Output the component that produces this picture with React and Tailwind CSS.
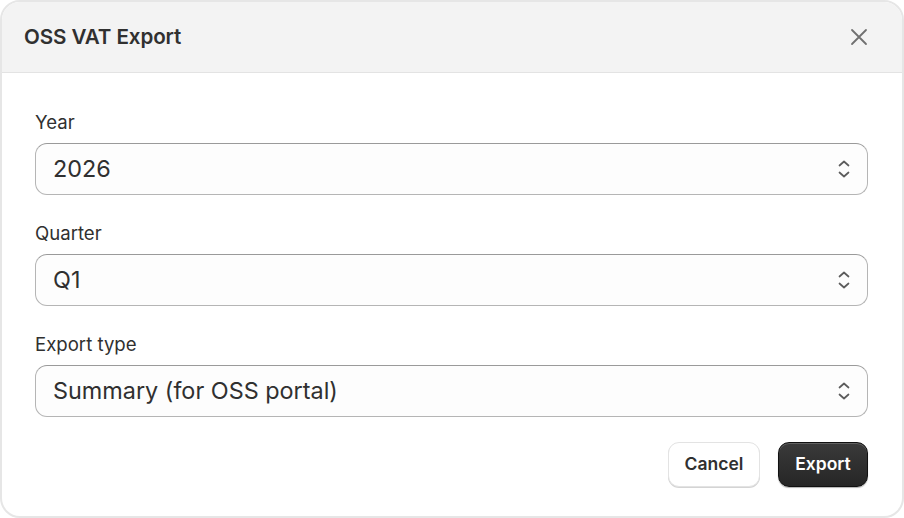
import React from "react";

const font = { fontFamily: "Inter, 'Noto Sans', sans-serif" };

function Chevrons() {
  return (
    <svg width="14" height="22" viewBox="0 0 14 22" fill="none" className="shrink-0">
      <path d="M2.5 7.5 L7 3.5 L11.5 7.5" stroke="#5c5c5c" strokeWidth="1.7" strokeLinecap="round" strokeLinejoin="round" />
      <path d="M2.5 14.5 L7 18.5 L11.5 14.5" stroke="#5c5c5c" strokeWidth="1.7" strokeLinecap="round" strokeLinejoin="round" />
    </svg>
  );
}

function Field({ label, value, last }) {
  return (
    <div className={last ? "" : "mb-[26px]"}>
      <div className="text-[18.6px] leading-[24px] text-[#303030] mb-[9px]">{label}</div>
      <div className="h-[52px] rounded-[12px] border border-[#b5b5b5] border-t-[#9a9a9a] bg-[#fdfdfd] flex items-center justify-between pl-[17px] pr-[16px]">
        <span className="text-[23.4px] text-[#303030]">{value}</span>
        <Chevrons />
      </div>
    </div>
  );
}

export default function App() {
  return (
    <div className="w-[904px] h-[518px] bg-white" style={font}>
      <div className="h-full rounded-[20px] border-2 border-[#e6e6e6] overflow-hidden flex flex-col bg-white">
        <div className="h-[71px] shrink-0 bg-[#f3f3f3] border-b border-[#e3e3e3] flex items-center justify-between pl-[22px] pr-[34px]">
          <h1 className="text-[20.6px] font-semibold text-[#303030] tracking-[-0.1px] pt-[1px]">OSS VAT Export</h1>
          <svg width="18" height="18" viewBox="0 0 18 18" fill="none">
            <path d="M2 2 L16 16 M16 2 L2 16" stroke="#707070" strokeWidth="1.8" strokeLinecap="round" />
          </svg>
        </div>
        <div className="px-[33px] pt-[37px] pr-[34px] flex flex-col">
          <Field label="Year" value="2026" />
          <Field label="Quarter" value="Q1" />
          <Field label="Export type" value="Summary (for OSS portal)" last />
          <div className="flex justify-end gap-[18px] mt-[25px]">
            <button className="h-[45px] w-[92px] rounded-[11px] bg-white border border-[#e3e3e3] shadow-[0_1px_0_#d4d4d4] text-[17.5px] font-semibold text-[#303030]">
              Cancel
            </button>
            <button className="h-[45px] w-[90px] rounded-[11px] bg-gradient-to-b from-[#3a3a3a] to-[#262626] border border-[#111] shadow-[inset_0_1px_0_rgba(255,255,255,0.2),0_1px_1px_rgba(0,0,0,0.3)] text-[17.5px] font-semibold text-white">
              Export
            </button>
          </div>
        </div>
      </div>
    </div>
  );
}
